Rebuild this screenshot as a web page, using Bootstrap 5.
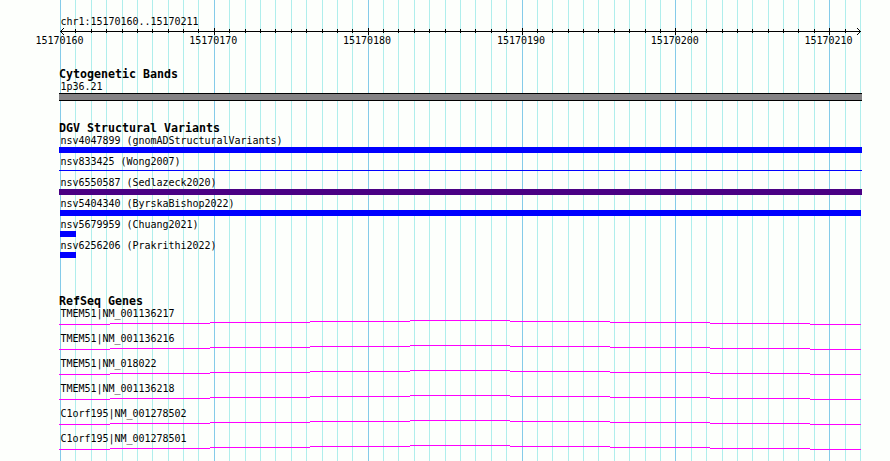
<!DOCTYPE html>
<html lang="en">
<head>
    <meta charset="UTF-8">
    <meta name="viewport" content="width=device-width, initial-scale=1.0">
    <title>chr1:15170160..15170211</title>

    <!-- Bootstrap CSS -->
    <link href="https://cdn.jsdelivr.net/npm/bootstrap@5.3.0/dist/css/bootstrap.min.css" rel="stylesheet">
    <style>
        body { background: #fdfffc; color: #000; }
        .browser { width: 890px; height: 461px; padding: 16px 28px 0 59px; font: 10px/12px "DejaVu Sans Mono", "Liberation Mono", monospace; letter-spacing: -0.02px; }
        .browser svg { display: block; shape-rendering: crispEdges; }
        .grid-lines { z-index: 0; }
        .tracks { z-index: 1; width: 803px; }
        .feature-label { height: 12px; padding-left: 1.5px; white-space: pre; }
        .track-title { height: 14px; margin: 0; font-size: 11.63px; line-height: 14px; font-weight: 700; letter-spacing: 0; }
        .scale { width: 817px; margin-left: -23.5px; }
        .track { margin-top: 20px; }
        .track-genes { margin-top: 33px; }
        .band { height: 8px; background: #848284; border: solid #000; border-width: 1px 0; }
        .variant { height: 21px; }
        .variant-bar { height: 6px; background: #00f; }
        .variant-bar.inset { margin: 0 1px; }
        .variant-bar.short { width: 16px; margin-left: 1px; }
        .variant-bar.purple { background: #4a0084; }
        .variant-bar.thin { height: 1px; margin-top: 2px; }
        .gene { height: 25px; }
    </style>
</head>
<body>

    <div class="browser position-relative overflow-hidden">
        <svg class="grid-lines position-absolute top-0 start-0" id="gridLines" width="890" height="461"></svg>

        <div class="tracks position-relative">
            <!-- Ruler -->
            <div class="feature-label">chr1:15170160..15170211</div>
            <svg id="ruler" width="803" height="7"></svg>
            <div class="scale d-flex justify-content-between">
                <span>15170160</span><span>15170170</span><span>15170180</span><span>15170190</span><span>15170200</span><span>15170210</span>
            </div>

            <div class="track">
                <h2 class="track-title">Cytogenetic Bands</h2>
                <div class="feature-label">1p36.21</div>
                <div class="band"></div>
            </div>

            <div class="track">
                <h2 class="track-title">DGV Structural Variants</h2>
                <div id="variants"></div>
            </div>

            <div class="track-genes">
                <h2 class="track-title">RefSeq Genes</h2>
                <div id="genes"></div>
            </div>
        </div>
    </div>

    <!-- Bootstrap JS -->
    <script src="https://cdn.jsdelivr.net/npm/bootstrap@5.3.0/dist/js/bootstrap.bundle.min.js"></script>

    <script>
    const start = 60;
    const step = 800 / 52;

    const variants = [
        ["nsv4047899 (gnomADStructuralVariants)", ""],
        ["nsv833425 (Wong2007)", "thin"],
        ["nsv6550587 (Sedlazeck2020)", "purple"],
        ["nsv5404340 (ByrskaBishop2022)", "inset"],
        ["nsv5679959 (Chuang2021)", "short"],
        ["nsv6256206 (Prakrithi2022)", "short"]
    ];

    const genes = [
        "TMEM51|NM_001136217",
        "TMEM51|NM_001136216",
        "TMEM51|NM_018022",
        "TMEM51|NM_001136218",
        "C1orf195|NM_001278502",
        "C1orf195|NM_001278501"
    ];

    // One vertical line per base, darker every ten bases
    function drawGrid() {
        let lines = "";
        let ticks = '<rect x="1" y="3" width="801" height="1"/>';
        for (let i = 0; i <= 52; i++) {
            const x = Math.round(start + i * step);
            const major = i % 10 === 0;
            lines += `<rect x="${x}" y="0" width="1" height="461" fill="${major ? "#84cbe9" : "#afeeec"}"/>`;
            if (i > 0 && i < 52) {
                ticks += `<rect x="${x - 59}" y="${major ? 0 : 1}" width="1" height="${major ? 7 : 4}"/>`;
            }
        }
        // arrow heads
        for (let d = 1; d <= 3; d++) {
            for (const y of [3 - d, 3 + d]) {
                ticks += `<rect x="${1 + d}" y="${y}" width="1" height="1"/>`;
                ticks += `<rect x="${801 - d}" y="${y}" width="1" height="1"/>`;
            }
        }
        document.getElementById("gridLines").innerHTML = lines;
        document.getElementById("ruler").innerHTML = ticks;
    }

    function drawVariants() {
        document.getElementById("variants").innerHTML = variants.map(([name, type]) => `
            <div class="variant">
                <div class="feature-label">${name}</div>
                <div class="variant-bar ${type}"></div>
            </div>`).join("");
    }

    function drawGenes() {
        const intron = "M0 4.5H51M51 3.5H151M151 2.5H251M251 1.5H351M351 .5H451M451 1.5H551M551 2.5H651M651 3.5H751M751 4.5H802";
        document.getElementById("genes").innerHTML = genes.map(name => `
            <div class="gene">
                <div class="feature-label">${name}</div>
                <svg width="803" height="5"><path d="${intron}" stroke="#f0f" fill="none"/></svg>
            </div>`).join("");
    }

    drawGrid();
    drawVariants();
    drawGenes();
    </script>
</body>
</html>
